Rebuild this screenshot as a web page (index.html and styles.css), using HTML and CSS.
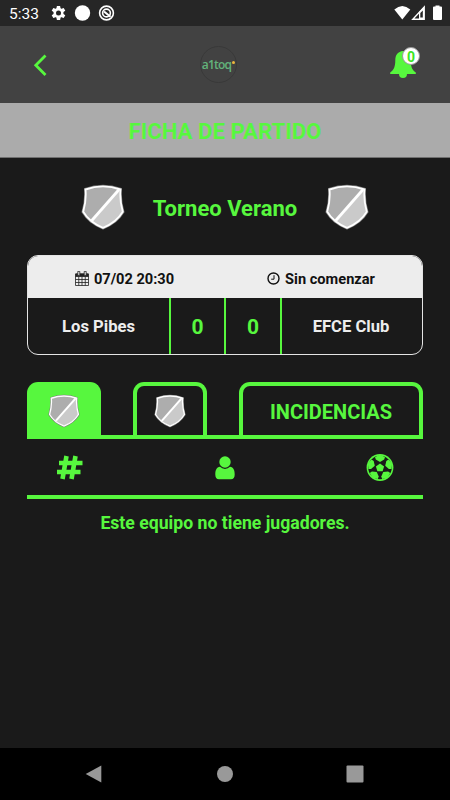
FILE: index.html
```html
<!DOCTYPE html>
<html lang="es">
<head>
  <meta charset="UTF-8">
  <meta name="viewport" content="width=device-width, initial-scale=1">
  <title>Ficha de partido</title>
  <link rel="stylesheet" href="styles.css">
</head>
<body>

  <svg class="defs" width="0" height="0">
    <symbol id="shield" viewBox="0 0 44 46">
      <path d="M4 5 Q22 -1.5 40 5 Q39 16 42.5 28 Q36 39 22 44.5 Q8 39 1.5 28 Q5 16 4 5Z" fill="#cacaca"/>
      <path d="M4 5 Q22 -1.5 38 5 L10 38 Q4 33 1.5 28 Q5 16 4 5Z" fill="#adadad"/>
      <path d="M38.5 5 L9.5 38" stroke="#fff" stroke-width="2.8"/>
      <path d="M4 5 Q22 -1.5 40 5 Q39 16 42.5 28 Q36 39 22 44.5 Q8 39 1.5 28 Q5 16 4 5Z" fill="none" stroke="#777" stroke-width="2"/>
      <path d="M4.5 5.5 Q22 -.8 39.5 5.5 Q38.5 16 41.8 27.8 Q35.5 38.5 22 43.8 Q8.5 38.5 2.2 27.8 Q5.5 16 4.5 5.5Z" fill="none" stroke="#fff" stroke-width="1.9"/>
    </symbol>
  </svg>

  <div class="status-bar">
    <span class="clock">5:33</span>
    <svg class="status-left" width="64" height="18" viewBox="0 0 64 18">
      <g fill="#fff">
        <circle cx="7.5" cy="9" r="5"/>
        <path d="M5.9 2h3.2l.6 3H5.3zM5.9 16h3.2l.6-3H5.3zM.7 6.7l1.6-2.8 3 1.1-2 3.4zM14.3 6.7l-1.6-2.8-3 1.1 2 3.4zM.7 11.3l1.6 2.8 3-1.1-2-3.4zM14.3 11.3l-1.6 2.8-3-1.1 2-3.4z"/>
        <circle cx="31.5" cy="9" r="7.7"/>
      </g>
      <circle cx="7.5" cy="9" r="2.5" fill="#262626"/>
      <g fill="none" stroke="#fff" stroke-width="1.6">
        <circle cx="55.5" cy="9" r="6.9"/>
        <circle cx="55.5" cy="9" r="3.9"/>
        <path d="M53 7.5l6.5 5.3" stroke-width="2"/>
      </g>
    </svg>
    <svg class="status-right" width="50" height="16" viewBox="0 0 50 16">
      <path d="M.3 4.500Q8.300-2.500 16.300 4.500L8.300 14.500Z" fill="#fff"/>
      <path d="M18.800 14.200H30.200V2Z" fill="none" stroke="#fff" stroke-width="1.400"/>
      <path d="M25 14V7l5-5v12z" fill="#fff"/>
      <path d="M26.300 12.500V8l2.500-2.500v7z" fill="#262626"/>
      <path d="M39 2.500q0-1 1-1h1.500V.5h4v1H47q1 0 1 1V14q0 1-1 1h-7q-1 0-1-1z" fill="#fff"/>
    </svg>
  </div>

  <header class="header">
    <svg class="back" width="16" height="24" viewBox="0 0 16 24">
      <path d="M12.500 2.500L2.800 12.200 12.500 22" fill="none" stroke="#57f73e" stroke-width="2.800"/>
    </svg>
    <div class="logo">a1toq<span class="logo-dot"></span></div>
    <div class="bell">
      <svg width="26" height="28" viewBox="0 0 26 28">
        <path d="M13 0C8 .5 5.300 4 5.300 9c0 7-1.500 10-5.100 12.500V23h8.800a4 4 0 0 0 8 0h8.800v-1.500C22.200 19 20.700 16 20.700 9 20.700 4 18 .5 13 0z" fill="#57f73e"/>
      </svg>
      <span class="badge">0</span>
    </div>
  </header>

  <h1 class="title">FICHA DE PARTIDO</h1>

  <main class="content">
    <div class="tournament">
      <svg class="shield"><use href="#shield"/></svg>
      <h2>Torneo Verano</h2>
      <svg class="shield"><use href="#shield"/></svg>
    </div>

    <section class="match">
      <div class="match-info">
        <div class="info-item info-date">
          <svg width="14" height="15" viewBox="0 0 14 15">
            <path d="M.5 3h13v11.500H.5zM.5 5.500h13M.5 8.500h13M.5 11.500h13M3.750 5.500v9M7 5.500v9M10.250 5.500v9" fill="none" stroke="#222" stroke-width=".8"/>
            <path d="M.5 2.500h13v3H.5z" fill="#222"/>
            <path d="M2.800.4h2v4h-2zM9.200.4h2v4h-2z" fill="#ededed" stroke="#222" stroke-width=".8"/>
          </svg>
          <span>07/02 20:30</span>
        </div>
        <div class="info-item info-status">
          <svg width="13" height="13" viewBox="0 0 13 13">
            <circle cx="6.500" cy="6.500" r="5.500" fill="none" stroke="#111" stroke-width="1.400"/>
            <path d="M7 3.200v4H4.200" fill="none" stroke="#111"/>
          </svg>
          <span>Sin comenzar</span>
        </div>
      </div>
      <div class="match-score">
        <span class="team">Los Pibes</span>
        <span class="score">0</span>
        <span class="score">0</span>
        <span class="team">EFCE Club</span>
      </div>
    </section>

    <nav class="tabs">
      <div class="tab active"><svg class="shield small"><use href="#shield"/></svg></div>
      <div class="tab"><svg class="shield small"><use href="#shield"/></svg></div>
      <div class="tab tab-wide">INCIDENCIAS</div>
    </nav>

    <div class="columns">
      <svg width="28" height="28" viewBox="0 0 28 28">
        <path d="M11.500 3L7.500 26M20.500 3L16.500 26M4 10h23.500M2 19h23.500" fill="none" stroke="#57f73e" stroke-width="4.600"/>
      </svg>
      <svg width="28" height="28" viewBox="0 0 28 28">
        <path d="M9 13.800c-3.500.2-4.700 3.700-4.700 7.700 0 3 1.200 4.700 3.700 4.700h12c2.500 0 3.700-1.700 3.700-4.700 0-4-1.200-7.500-4.700-7.700a7 7 0 0 1-10 0z" fill="#57f73e"/>
        <circle cx="14" cy="9" r="5.700" fill="#57f73e"/>
      </svg>
      <svg width="28" height="28" viewBox="0 0 28 28">
        <circle cx="14" cy="14.500" r="13.400" fill="#57f73e"/>
        <circle cx="14" cy="14.500" r="11.800" fill="#1a1a1a"/>
        <g fill="#57f73e">
          <path id="patch" d="M9 4L14 1.800 19 4 18.200 6.500 14 9 9.800 6.500z"/>
          <use href="#patch" transform="rotate(72 14 14.500)"/>
          <use href="#patch" transform="rotate(144 14 14.500)"/>
          <use href="#patch" transform="rotate(216 14 14.500)"/>
          <use href="#patch" transform="rotate(288 14 14.500)"/>
          <path d="M14 10.400l4.100 3-1.500 4.800h-5.200l-1.500-4.800z"/>
        </g>
      </svg>
    </div>

    <p class="empty">Este equipo no tiene jugadores.</p>
  </main>

  <footer class="nav-bar">
    <svg width="18" height="20" viewBox="0 0 18 20"><path d="M16.300 1.500v17L.7 10z" fill="#999"/></svg>
    <svg width="18" height="20" viewBox="0 0 18 20"><circle cx="9" cy="10" r="8" fill="#999"/></svg>
    <svg width="18" height="20" viewBox="0 0 18 20"><rect x=".5" y="1.500" width="17" height="17" rx="1" fill="#999"/></svg>
  </footer>

</body>
</html>
```

FILE: styles.css
```css
* {
  box-sizing: border-box;
}
body {
  margin: 0;
  height: 800px;
  display: flex;
  flex-direction: column;
  font-family: Roboto, sans-serif;
  font-weight: 700;
  color: #57f73e;
  background: #1a1a1a;
  overflow: hidden;
}
svg {
  display: block;
  flex: none;
}
.defs {
  position: absolute;
}
.status-bar {
  height: 26px;
  display: flex;
  align-items: center;
  padding: 0 6px 0 9px;
  background: #262626;
}
.clock {
  width: 42px;
  color: #fff;
  font-size: 15.5px;
  font-weight: 400;
  padding-top: 2px;
}
.status-left {
  width: 64px;
}
.status-right {
  margin-left: auto;
}
.header {
  height: 77px;
  display: grid;
  grid-template-columns: 167px 37px 1fr;
  align-items: center;
  padding: 0 34px 0 33px;
  background: #424242;
}
.logo {
  width: 37px;
  height: 37px;
  display: flex;
  align-items: center;
  justify-content: center;
  border: 1px solid #393939;
  border-radius: 50%;
  color: #62b37b;
  font-family: "Open Sans", sans-serif;
  font-size: 12px;
  font-weight: 600;
  letter-spacing: -0.8px;
}
.logo-dot {
  width: 3px;
  height: 3px;
  margin: 0 0 5px 1px;
  border-radius: 50%;
  background: #edb63c;
}
.bell {
  position: relative;
  justify-self: end;
  padding-top: 1px;
}
.badge {
  position: absolute;
  top: -3px;
  right: -4px;
  width: 18px;
  height: 18px;
  border: 1px solid #999;
  border-radius: 50%;
  background: #fff;
  color: #3be625;
  font-size: 14px;
  line-height: 19px;
  text-align: center;
}
.title {
  height: 55px;
  margin: 0;
  border-bottom: 1px solid #6f6f6f;
  background: #ababab;
  font-size: 22.2px;
  line-height: 57px;
  text-align: center;
}
.content {
  flex: 1;
  padding: 26px 27px 0;
}
.tournament {
  display: flex;
  align-items: center;
  justify-content: center;
  gap: 28px;
  height: 46px;
}
.tournament h2 {
  margin: 0;
  padding-top: 2px;
  font-size: 22px;
}
.shield {
  width: 44px;
  height: 46px;
}
.shield.small {
  width: 32px;
  height: 34px;
}
.match {
  height: 100px;
  margin-top: 25px;
  border: 1px solid #e4e4e4;
  border-radius: 11px;
  overflow: hidden;
}
.match-info {
  display: grid;
  grid-template-columns: 193px 1fr;
  height: 42px;
  background: #ededed;
  color: #111;
  font-size: 14.6px;
}
.info-item {
  display: flex;
  align-items: center;
  justify-content: center;
  gap: 5px;
  padding-top: 3px;
}
.info-status {
  padding-right: 1px;
}
.match-score {
  display: grid;
  grid-template-columns: 141px 55px 56px 1fr;
  height: 56px;
  line-height: 58px;
  text-align: center;
}
.team {
  color: #ededed;
  font-size: 16.6px;
}
.score {
  border-left: 2px solid #57f73e;
  font-size: 21px;
}
.score + .team {
  padding-right: 2px;
  border-left: 2px solid #57f73e;
}
.tabs {
  display: grid;
  grid-template-columns: 74px 74px 1fr;
  column-gap: 32px;
  height: 57px;
  margin-top: 27px;
  border-bottom: 4px solid #57f73e;
}
.tab {
  display: flex;
  align-items: center;
  justify-content: center;
  border: 4px solid #57f73e;
  border-bottom: 0;
  border-radius: 11px 11px 0 0;
}
.tab.active {
  background: #57f73e;
}
.tab-wide {
  padding-top: 2px;
  font-size: 20px;
}
.columns {
  display: flex;
  justify-content: space-between;
  align-items: center;
  height: 60px;
  padding: 0 29px 0 28px;
  border-bottom: 4px solid #57f73e;
}
.empty {
  margin: 13px 0 0;
  font-size: 17.65px;
  line-height: 22px;
  text-align: center;
}
.nav-bar {
  height: 52px;
  display: flex;
  align-items: center;
  justify-content: space-between;
  padding: 0 86px 0 85px;
  background: #000;
}
```
